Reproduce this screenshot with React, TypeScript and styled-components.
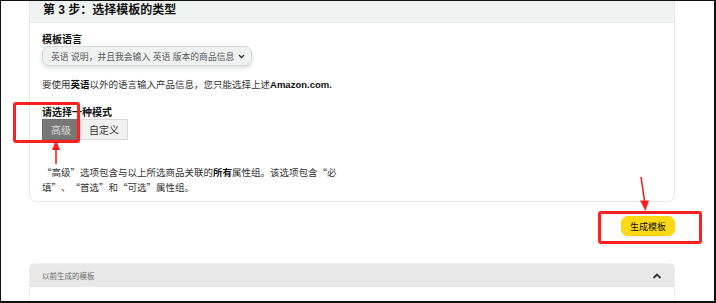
import React from 'react';
import styled, { createGlobalStyle } from 'styled-components';

const GlobalStyle = createGlobalStyle`
  html, body {
    margin: 0;
    padding: 0;
    background: #fff;
  }
  body {
    font-family: "Liberation Sans", "Noto Sans CJK SC", sans-serif;
    color: #0f1111;
  }
`;

const Frame = styled.div`
  position: relative;
  width: 716px;
  height: 303px;
  box-sizing: border-box;
  border: 1px solid #111;
  border-right-width: 2px;
  border-bottom-width: 2px;
  padding-left: 28px;
  overflow: hidden;
`;

const Column = styled.div`
  width: 646px;
  display: flex;
  flex-direction: column;
`;

const Card = styled.section`
  border: 1px solid #e7e9e9;
  border-top: none;
  border-radius: 0 0 7px 7px;
  overflow: hidden;
`;

const CardHeader = styled.h2`
  margin: 0;
  height: 22px;
  padding: 0 13px;
  background: #f0f2f2;
  border-bottom: 1px solid #e9ebeb;
  box-sizing: border-box;
  font-size: 12px;
  line-height: 18px;
  font-weight: 700;
  color: #0f1111;
`;

const CardBody = styled.div`
  padding: 11px 12px 6px;
  display: flex;
  flex-direction: column;
  align-items: flex-start;
`;

const Label = styled.div<{ $gap?: number }>`
  margin-top: ${(p) => p.$gap ?? 0}px;
  font-size: 10px;
  line-height: 12px;
  font-weight: 700;
  color: #0f1111;
`;

const Select = styled.div`
  height: 20px;
  box-sizing: border-box;
  padding: 0 6px 0 8px;
  display: flex;
  align-items: center;
  gap: 4px;
  background: #f0f2f2;
  border: 1px solid #d5d9d9;
  border-radius: 7px;
  box-shadow: 0 2px 4px rgba(15, 17, 17, 0.15);
  font-size: 8.8px;
  color: #565959;
`;

const Text = styled.p<{ $gap?: number; $max?: number }>`
  margin: ${(p) => p.$gap ?? 0}px 0 0;
  max-width: ${(p) => (p.$max ? `${p.$max}px` : 'none')};
  font-size: 9.5px;
  line-height: 14px;
  color: #333;

  b {
    color: #0f1111;
    font-weight: 700;
  }
`;

const ModeRow = styled.div`
  display: flex;
`;

const ModeButton = styled.button<{ $active?: boolean }>`
  height: 21px;
  padding: 0 8px;
  font-family: inherit;
  font-size: 10px;
  border: 1px solid ${(p) => (p.$active ? '#6f6f6f' : '#d9d9d9')};
  background: ${(p) => (p.$active ? '#787878' : '#f1f1f1')};
  color: ${(p) => (p.$active ? '#dcdcdc' : '#333')};
  border-radius: 0;
  cursor: pointer;
`;

const Description = styled(Text)`
  font-family: "Noto Sans CJK SC", sans-serif;
  line-height: 15px;
  margin-top: 25px;
`;

// full-width quote marks, as the CJK system font draws them
const Quote = styled.span<{ $open?: boolean }>`
  display: inline-block;
  width: 1em;
  text-align: ${(p) => (p.$open ? 'right' : 'left')};
`;

const NoWrap = styled.span`
  white-space: nowrap;
`;

const Actions = styled.div`
  display: flex;
  justify-content: flex-end;
  margin-top: 14px;
`;

const PrimaryButton = styled.button`
  height: 20px;
  padding: 0 8px;
  background: #ffd814;
  border: 1px solid #fcd200;
  border-radius: 7px;
  box-shadow: 0 2px 4px rgba(213, 217, 217, 0.5);
  font-family: inherit;
  font-size: 9px;
  color: #0f1111;
`;

const Accordion = styled.section`
  margin-top: 27px;
  border: 1px solid #eeeeee;
  border-radius: 6px 6px 0 0;
  height: 60px;
`;

const AccordionHeader = styled.div`
  height: 23px;
  background: #e8e8e8;
  display: flex;
  align-items: center;
  justify-content: space-between;
  padding: 0 12px;
  font-size: 7.5px;
  color: #6b6b6b;
`;

const Highlight = styled.div<{ $x: number; $y: number; $w: number; $h: number }>`
  position: absolute;
  left: ${(p) => p.$x}px;
  top: ${(p) => p.$y}px;
  width: ${(p) => p.$w}px;
  height: ${(p) => p.$h}px;
  box-sizing: border-box;
  border: 3px solid #fe1f1f;
  border-radius: 3px;
  pointer-events: none;
`;

const Arrow = styled.svg<{ $x: number; $y: number }>`
  position: absolute;
  left: ${(p) => p.$x}px;
  top: ${(p) => p.$y}px;
  overflow: visible;
  pointer-events: none;
`;

const Quoted: React.FC<{ children: React.ReactNode }> = ({ children }) => (
  <NoWrap>
    <Quote $open>“</Quote>
    {children}
    <Quote>”</Quote>
  </NoWrap>
);

export default function App() {
  return (
    <>
      <GlobalStyle />
      <Frame>
        <Column>
          <Card>
            <CardHeader>第 3 步：选择模板的类型</CardHeader>
            <CardBody>
              <Label>模板语言</Label>
              <Select>
                <span>英语 说明，并且我会输入 英语 版本的商品信息</span>
                <svg width="7" height="5" viewBox="0 0 7 5">
                  <path d="M1 1l2.5 2.5L6 1" fill="none" stroke="#333" strokeWidth="1.3" />
                </svg>
              </Select>
              <Text $gap={12}>
                要使用<b>英语</b>以外的语言输入产品信息，您只能选择上述<b>Amazon.com.</b>
              </Text>
              <Label $gap={14} style={{ lineHeight: '13px' }}>
                请选择一种模式
              </Label>
              <ModeRow>
                <ModeButton $active>高级</ModeButton>
                <ModeButton>自定义</ModeButton>
              </ModeRow>
              <Description $max={298}>
                <Quoted>高级</Quoted>选项包含与以上所选商品关联的<b>所有</b>属性组。该选项包含
                <NoWrap>
                  <Quote $open>“</Quote>必
                </NoWrap>
                <NoWrap>
                  填<Quote>”</Quote>、
                </NoWrap>
                <Quoted>首选</Quoted>和<Quoted>可选</Quoted>属性组。
              </Description>
            </CardBody>
          </Card>
          <Actions>
            <PrimaryButton>生成模板</PrimaryButton>
          </Actions>
          <Accordion>
            <AccordionHeader>
              <span>以前生成的模板</span>
              <svg width="10" height="6" viewBox="0 0 10 6">
                <path d="M1.5 5L5 1.5 8.5 5" fill="none" stroke="#333" strokeWidth="1.8" />
              </svg>
            </AccordionHeader>
          </Accordion>
        </Column>

        <Highlight $x={12} $y={101} $w={67} $h={41} />
        <Arrow $x={50} $y={139} width="10" height="24" viewBox="0 0 10 24">
          <path d="M5 24V7" stroke="#fe1f1f" strokeWidth="1.6" />
          <path d="M5 0L9 10H1z" fill="#fe1f1f" />
        </Arrow>

        <Highlight $x={597} $y={210} $w={104} $h={33} />
        <Arrow $x={637} $y={176} width="10" height="34" viewBox="0 0 10 34">
          <path d="M3 0L6.5 24" stroke="#fe1f1f" strokeWidth="1.6" />
          <path d="M7.5 34L2 23.5H11z" fill="#fe1f1f" />
        </Arrow>
      </Frame>
    </>
  );
}
